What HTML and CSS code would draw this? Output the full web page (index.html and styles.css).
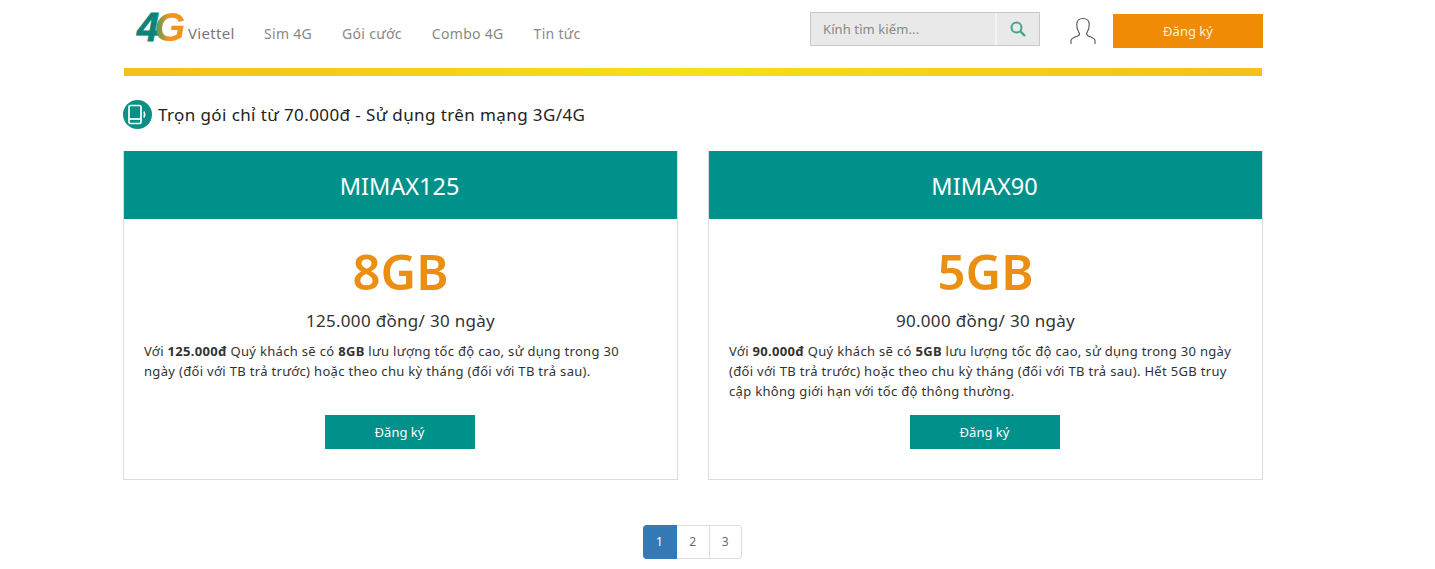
FILE: index.html
```html
<!DOCTYPE html>
<html lang="vi">
<head>
    <meta charset="UTF-8">
    <meta name="viewport" content="width=device-width, initial-scale=1.0">
    <title>4G Viettel</title>
    <link rel="stylesheet" href="styles.css">
</head>
<body>
    <div class="page">
        <header class="header">
            <a href="#" class="logo">
                <span class="logo-mark"><span class="logo-four">4</span><span class="logo-g">G</span></span>
                <span class="logo-name">Viettel</span>
            </a>
            <nav class="menu">
                <a href="#">Sim 4G</a>
                <a href="#">Gói cước</a>
                <a href="#">Combo 4G</a>
                <a href="#">Tin tức</a>
            </nav>
            <div class="search">
                <span class="search-text">Kính tìm kiếm...</span>
                <span class="search-btn">
                    <svg width="18" height="18" viewBox="0 0 18 18" fill="none" stroke="#3fa78f" stroke-width="2">
                        <circle cx="7.5" cy="7.5" r="5"/>
                        <path d="M11.2 11.2 L16 16" stroke-width="2.4"/>
                    </svg>
                </span>
            </div>
            <svg class="user" width="28" height="28" viewBox="0 0 28 28" fill="none" stroke="#555" stroke-width="1.1">
                <path d="M2 27 V23.5 C2 21 6 20.5 9.5 18.5 C11 17.5 10.5 16 9.5 14.5 C8 12.5 7.8 10 7.8 7.5 C7.8 3.5 10.5 1.5 14 1.5 C17.5 1.5 20.2 3.5 20.2 7.5 C20.2 10 20 12.5 18.5 14.5 C17.5 16 17 17.5 18.5 18.5 C22 20.5 26 21 26 23.5 V27"/>
            </svg>
            <a href="#" class="btn-register">Đăng ký</a>
        </header>
        <div class="stripe"></div>

        <h2 class="title">
            <span class="title-icon">
                <svg width="25" height="25" viewBox="0 0 25 25" fill="none" stroke="#fff" stroke-width="1.7">
                    <rect x="4" y="3.5" width="12" height="18" rx="1.5"/>
                    <path d="M4 17 H16"/>
                    <path d="M19 9.5 Q20.4 12.5 19 15.5" stroke-width="1.6"/>
                </svg>
            </span>
            Trọn gói chỉ từ 70.000đ - Sử dụng trên mạng 3G/4G
        </h2>

        <div class="cards">
            <div class="card">
                <div class="card-head">MIMAX125</div>
                <div class="card-body">
                    <div class="data">8GB</div>
                    <div class="price">125.000 đồng/ 30 ngày</div>
                    <p class="desc">Với <b>125.000đ</b> Quý khách sẽ có <b>8GB</b> lưu lượng tốc độ cao, sử dụng trong 30 ngày (đối với TB trả trước) hoặc theo chu kỳ tháng (đối với TB trả sau).</p>
                    <a href="#" class="btn-card">Đăng ký</a>
                </div>
            </div>
            <div class="card">
                <div class="card-head">MIMAX90</div>
                <div class="card-body">
                    <div class="data">5GB</div>
                    <div class="price">90.000 đồng/ 30 ngày</div>
                    <p class="desc">Với <b>90.000đ</b> Quý khách sẽ có <b>5GB</b> lưu lượng tốc độ cao, sử dụng trong 30 ngày (đối với TB trả trước) hoặc theo chu kỳ tháng (đối với TB trả sau). Hết 5GB truy cập không giới hạn với tốc độ thông thường.</p>
                    <a href="#" class="btn-card">Đăng ký</a>
                </div>
            </div>
        </div>

        <div class="pagination">
            <a href="#" class="active">1</a>
            <a href="#">2</a>
            <a href="#">3</a>
        </div>
    </div>
</body>
</html>
```

FILE: styles.css
```css
body {
    margin: 0;
    background: #fff;
    font-family: "Noto Sans", "Open Sans", sans-serif;
    color: #222;
    overflow: hidden;
}

a {
    text-decoration: none;
}

.page {
    width: 1140px;
    margin-left: 123px;
}

/* header */
.header {
    display: flex;
    align-items: center;
    height: 68px;
    box-sizing: border-box;
    padding-left: 1px;
}

.logo {
    display: flex;
    flex: none;
    align-items: center;
    margin-left: 13px;
    width: 127px;
}

.logo-mark {
    display: flex;
    font-family: "Liberation Sans", sans-serif;
    font-size: 40px;
    font-weight: bold;
    font-style: italic;
    letter-spacing: -5px;
    line-height: 40px;
    margin-top: -14px;
    width: 51px;
}

.logo-four {
    color: #0b8478;
    -webkit-text-stroke: 0.8px #0b8478;
}

.logo-g {
    background: linear-gradient(to right, #2f9a72, #f0951c 45%);
    -webkit-background-clip: text;
    background-clip: text;
    color: transparent;
    padding-right: 6px;
}

.logo-name {
    margin-top: -3px;
    font-size: 15px;
    letter-spacing: 0.3px;
    color: #777;
}

.menu {
    display: flex;
    flex: none;
    gap: 30px;
    margin-top: -2px;
}

.menu a {
    font-size: 14px;
    color: #888;
    letter-spacing: 0.3px;
    white-space: nowrap;
}

.search {
    display: flex;
    flex: none;
    align-items: center;
    width: 230px;
    height: 34px;
    box-sizing: border-box;
    margin-left: auto;
    margin-top: -10px;
    background: #e9e9e9;
    border: 1px solid #c9c9c9;
}

.search-text {
    flex: 1;
    padding-left: 12px;
    font-size: 13px;
    letter-spacing: 0.1px;
    color: #888;
}

.search-btn {
    display: flex;
    align-items: center;
    justify-content: center;
    width: 44px;
    height: 100%;
    border-left: 2px solid #f4f4f4;
    box-sizing: border-box;
}

.user {
    flex: none;
    margin-left: 29px;
    margin-top: -6px;
}

.btn-register {
    display: block;
    flex: none;
    width: 150px;
    height: 34px;
    line-height: 34px;
    margin-left: 16px;
    margin-top: -6px;
    text-align: center;
    background: #ef8b04;
    color: #fbeedd;
    font-size: 13px;
}

.stripe {
    width: 1138px;
    height: 8px;
    margin-left: 1px;
    background: linear-gradient(to right, #f4c01d, #f6e017 50%, #f4c01d);
}

/* title */
.title {
    display: flex;
    align-items: center;
    gap: 6px;
    height: 30px;
    margin: 23px 0 22px;
    font-size: 17px;
    font-weight: normal;
    color: #222;
    letter-spacing: 0.4px;
}

.title-icon {
    display: flex;
    align-items: center;
    justify-content: center;
    width: 29px;
    height: 29px;
    border-radius: 50%;
    background: #0e8f85;
}

/* cards */
.cards {
    display: flex;
    gap: 30px;
}

.card {
    width: 555px;
    height: 329px;
    box-sizing: border-box;
    border: 1px solid #ddd;
    border-top: none;
}

.card-head {
    height: 68px;
    line-height: 70px;
    padding-right: 2px;
    text-align: center;
    background: #00918a;
    color: #fff;
    font-size: 23.5px;
}

.card-body {
    display: flex;
    flex-direction: column;
    align-items: center;
    height: 260px;
    box-sizing: border-box;
    padding: 0 20px;
}

.data {
    margin-top: 18px;
    font-size: 49px;
    line-height: 68px;
    font-weight: 600;
    color: #ea8f12;
}

.price {
    margin-top: 3px;
    font-size: 17px;
    line-height: 26px;
    letter-spacing: 0.3px;
    color: #333;
}

.desc {
    align-self: flex-start;
    width: 508px;
    margin: 7px 0 0;
    height: 60px;
    font-size: 13px;
    line-height: 20px;
    letter-spacing: 0.32px;
    color: #333;
}

.btn-card {
    display: block;
    width: 150px;
    height: 34px;
    line-height: 34px;
    margin-top: 14px;
    margin-right: 2px;
    text-align: center;
    background: #00918a;
    color: #fff;
    font-size: 13px;
}

/* pagination */
.pagination {
    display: flex;
    width: 99px;
    height: 34px;
    margin: 45px 0 0 520px;
}

.pagination a {
    flex: 1;
    line-height: 32px;
    text-align: center;
    font-size: 12px;
    color: #5d6d7a;
    border: 1px solid #ddd;
    border-left: none;
}

.pagination a:last-child {
    border-radius: 0 4px 4px 0;
}

.pagination a.active {
    flex: none;
    width: 34px;
    box-sizing: border-box;
    background: #337ab7;
    border-color: #337ab7;
    color: #fff;
    border-radius: 4px 0 0 4px;
}
```
